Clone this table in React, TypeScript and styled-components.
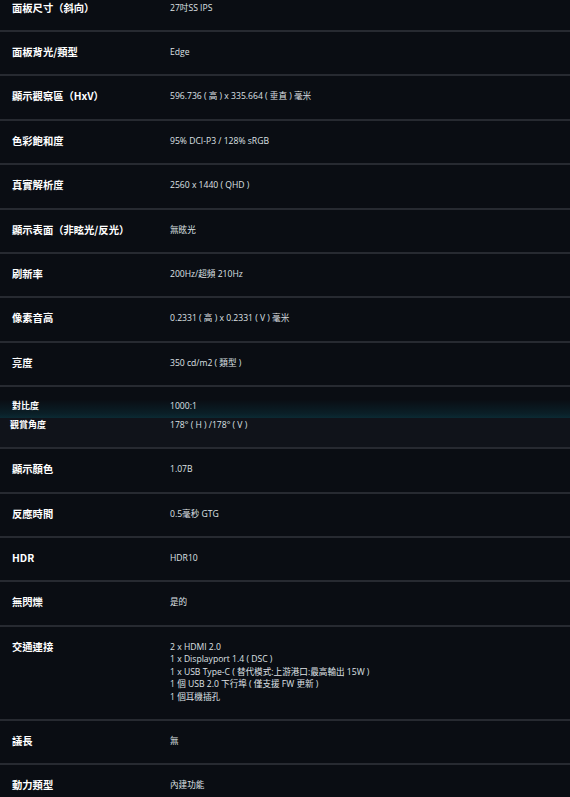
import React from 'react';
import styled, { createGlobalStyle } from 'styled-components';

const GlobalStyle = createGlobalStyle`
  html, body {
    margin: 0;
    padding: 0;
    background: #0a0d13;
    overflow: hidden;
  }
`;

const Page = styled.div`
  width: 570px;
  height: 797px;
  overflow: hidden;
  background: #0a0d13;
  font-family: "Open Sans", "Noto Sans CJK TC", sans-serif;
`;

const SpecList = styled.div`
  display: flex;
  flex-direction: column;
  margin-top: -12.4px;
`;

const Row = styled.div`
  display: grid;
  grid-template-columns: 158px 1fr;
  align-items: start;
  padding: 14px 0 16px 12px;
  border-bottom: 2px solid #272a31;
`;

const GlowRow = styled(Row)`
  padding: 13px 0 5.6px 12px;
  border-bottom: none;
  background: linear-gradient(
    to bottom,
    rgba(10, 13, 19, 0) 0%,
    rgba(10, 13, 19, 0) 40%,
    #0a1f27 85%,
    #0b2a33 100%
  );
`;

const OverlapRow = styled(Row)`
  padding: 1px 0 15.6px 10px;
  grid-template-columns: 160px 1fr;
  background: #10131a;
`;

const Label = styled.div<{ $small?: boolean }>`
  color: #ffffff;
  font-family: "Noto Sans CJK TC", "Open Sans", sans-serif;
  font-weight: 700;
  font-size: ${(p) => (p.$small ? '9px' : '10.3px')};
  line-height: 12.4px;
  white-space: nowrap;
`;

const Value = styled.div`
  color: #dfe1e5;
  font-size: 8.6px;
  line-height: 12.4px;
  white-space: nowrap;
`;

const Line = styled.div``;

type Spec = { label: string; value: string[] };

const specsTop: Spec[] = [
  { label: '面板尺寸（斜向）', value: ['27吋SS IPS'] },
  { label: '面板背光/類型', value: ['Edge'] },
  { label: '顯示觀察區（HxV）', value: ['596.736 ( 高 ) x 335.664 ( 垂直 ) 毫米'] },
  { label: '色彩飽和度', value: ['95% DCI-P3 / 128% sRGB'] },
  { label: '真實解析度', value: ['2560 x 1440 ( QHD )'] },
  { label: '顯示表面（非眩光/反光）', value: ['無眩光'] },
  { label: '刷新率', value: ['200Hz/超頻 210Hz'] },
  { label: '像素音高', value: ['0.2331 ( 高 ) x 0.2331 ( V ) 毫米'] },
  { label: '亮度', value: ['350 cd/m2 ( 類型 )'] },
];

const specsBottom: Spec[] = [
  { label: '顯示顏色', value: ['1.07B'] },
  { label: '反應時間', value: ['0.5毫秒 GTG'] },
  { label: 'HDR', value: ['HDR10'] },
  { label: '無閃爍', value: ['是的'] },
  {
    label: '交通連接',
    value: [
      '2 x HDMI 2.0',
      '1 x Displayport 1.4 ( DSC )',
      '1 x USB Type-C ( 替代模式:上游港口:最高輸出 15W )',
      '1 個 USB 2.0 下行埠 ( 僅支援 FW 更新 )',
      '1 個耳機插孔',
    ],
  },
  { label: '議長', value: ['無'] },
  { label: '動力類型', value: ['內建功能'] },
];

function SpecRow({ spec }: { spec: Spec }) {
  return (
    <Row>
      <Label>{spec.label}</Label>
      <Value>
        {spec.value.map((v) => (
          <Line key={v}>{v}</Line>
        ))}
      </Value>
    </Row>
  );
}

export default function App() {
  return (
    <Page>
      <GlobalStyle />
      <SpecList>
        {specsTop.map((s) => (
          <SpecRow key={s.label} spec={s} />
        ))}
        <GlowRow>
          <Label $small>對比度</Label>
          <Value>1000:1</Value>
        </GlowRow>
        <OverlapRow>
          <Label $small>觀賞角度</Label>
          <Value>178° ( H ) /178° ( V )</Value>
        </OverlapRow>
        {specsBottom.map((s) => (
          <SpecRow key={s.label} spec={s} />
        ))}
      </SpecList>
    </Page>
  );
}
